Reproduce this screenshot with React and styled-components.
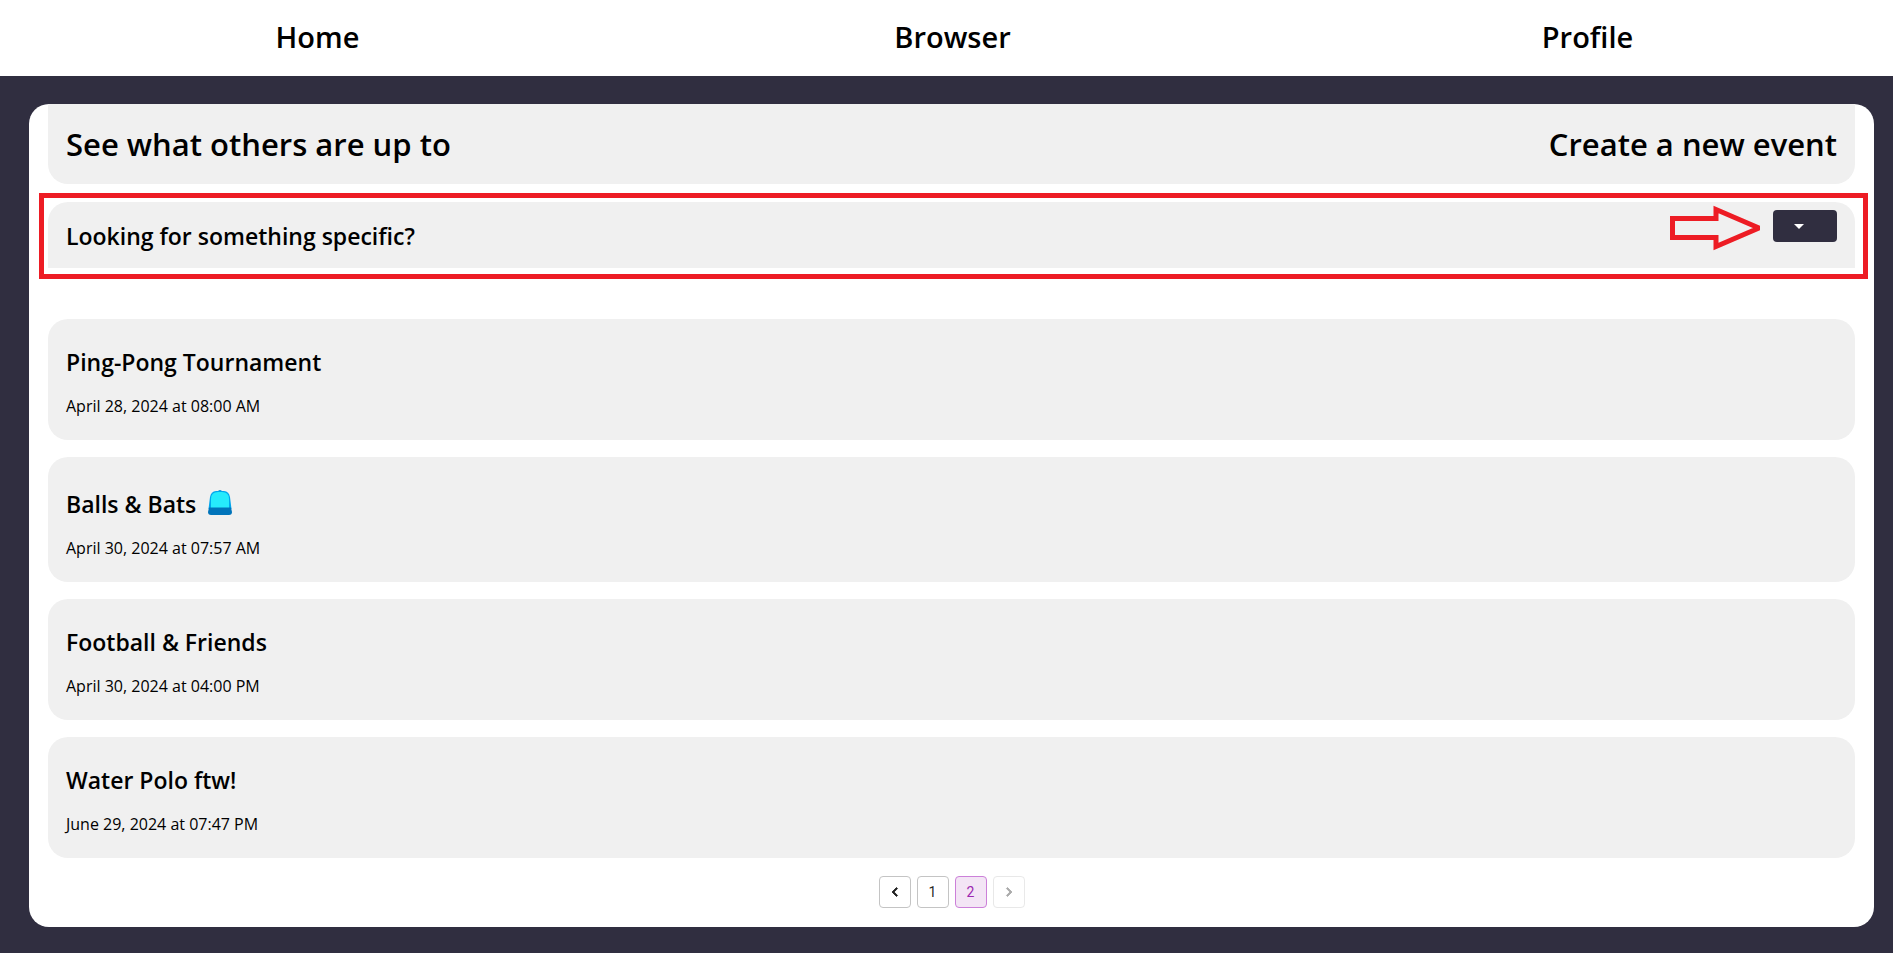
import React from 'react';
import styled, { createGlobalStyle } from 'styled-components';

const navy = '#302e40';
const card = '#f0f0f0';
const red = '#ed1c24';

const GlobalStyle = createGlobalStyle`
  *, *::before, *::after { box-sizing: border-box; }
  body {
    margin: 0;
    background: ${navy};
    color: #000;
    font-family: 'Trebuchet MS', 'Open Sans', 'Noto Sans', sans-serif;
  }
  h1, h2, h3, p, ul { margin: 0; padding: 0; }
`;

const NavBar = styled.nav`
  display: grid;
  grid-template-columns: repeat(3, 1fr);
  column-gap: 24px;
  padding: 17px 0 19px 12px;
  background: #fff;
`;

const NavLink = styled.a`
  justify-self: center;
  color: #000;
  font-size: 29px;
  font-weight: 600;
  line-height: 40px;
  text-decoration: none;
`;

const Panel = styled.main`
  margin: 28px 19px 26px 29px;
  padding: 0 19px 19px;
  border-radius: 20px;
  background: #fff;
`;

const Header = styled.header`
  display: flex;
  justify-content: space-between;
  align-items: center;
  padding: 18px;
  border-radius: 0 0 20px 20px;
  background: ${card};
`;

const Title = styled.h1`
  font-size: 31px;
  font-weight: 600;
  line-height: 44px;
`;

const CreateLink = styled.a`
  color: #000;
  font-size: 31px;
  font-weight: 600;
  line-height: 44px;
  text-decoration: none;
`;

const Search = styled.section`
  position: relative;
  display: flex;
  justify-content: space-between;
  align-items: flex-start;
  margin: 18px 0 51px;
  padding: 8px 18px 6px;
  border-radius: 20px 20px 0 0;
  background: ${card};
`;

const Subtitle = styled.h2`
  font-size: 23px;
  font-weight: 600;
  line-height: 52px;
`;

const ToggleButton = styled.button`
  display: flex;
  align-items: center;
  width: 64px;
  height: 32px;
  padding: 0 0 0 16px;
  border: 0;
  border-radius: 4px;
  background: ${navy};
  color: #fff;
  cursor: pointer;
`;

const Highlight = styled.div`
  position: absolute;
  inset: -9px -13px -11px -9px;
  border: 5px solid ${red};
  pointer-events: none;
`;

const Arrow = styled.svg`
  position: absolute;
  top: 3px;
  right: 92px;
  pointer-events: none;
`;

const EventList = styled.ul`
  display: flex;
  flex-direction: column;
  gap: 17px;
  list-style: none;
`;

const EventCard = styled.li`
  display: flex;
  flex-direction: column;
  gap: 20px;
  padding: 29px 18px 24px;
  border-radius: 20px;
  background: ${card};
`;

const EventTitle = styled.h3`
  display: flex;
  align-items: flex-end;
  gap: 8px;
  font-size: 23px;
  font-weight: 600;
  line-height: 28px;
`;

const EventDate = styled.p`
  font-size: 16px;
  line-height: 20px;
`;

const Pagination = styled.nav`
  display: flex;
  justify-content: center;
  gap: 6px;
  padding-top: 18px;
`;

const PageButton = styled.button`
  display: flex;
  align-items: center;
  justify-content: center;
  width: 32px;
  height: 32px;
  padding: 0;
  border: 1px solid ${p => (p.$active ? '#cc80d9' : '#c4c4c4')};
  border-radius: 4px;
  background: ${p => (p.$active ? '#f3e5f5' : 'transparent')};
  color: ${p => (p.$active ? '#9c27b0' : 'rgba(0, 0, 0, 0.87)')};
  font-family: Roboto, sans-serif;
  font-size: 14px;
  line-height: 20px;
  cursor: pointer;

  &:disabled {
    opacity: 0.38;
    cursor: default;
  }
`;

const CapIcon = () => (
  <svg width="32" height="32" viewBox="0 0 32 32" role="img" aria-label="cap">
    <path d="M14 6a2 2 0 0 1 4 0z" fill="#0093e0" />
    <path d="M4.500 23 6 11Q7 5.500 12 5h8q5 .5 6 6l1.500 12z" fill="#00a6ed" />
    <path d="M7 22V13q0-7 7-7h4q7 0 7 7v9z" fill="#26eafc" />
    <path d="M5 21.500h22l1 4.500q0 3-3 3H7q-3 0-3-3z" fill="#0074ba" />
  </svg>
);

const Chevron = ({ d }) => (
  <svg width="18" height="18" viewBox="0 0 24 24" fill="currentColor" stroke="currentColor" aria-hidden="true">
    <path d={d} />
  </svg>
);

const events = [
  { title: 'Ping-Pong Tournament', date: 'April 28, 2024 at 08:00 AM' },
  { title: 'Balls & Bats', date: 'April 30, 2024 at 07:57 AM', cap: true },
  { title: 'Football & Friends', date: 'April 30, 2024 at 04:00 PM' },
  { title: 'Water Polo ftw!', date: 'June 29, 2024 at 07:47 PM' },
];

export default function App() {
  return (
    <>
      <GlobalStyle />
      <NavBar>
        {['Home', 'Browser', 'Profile'].map(name => (
          <NavLink key={name} href={`#${name.toLowerCase()}`}>{name}</NavLink>
        ))}
      </NavBar>
      <Panel>
        <Header>
          <Title>See what others are up to</Title>
          <CreateLink href="#create">Create a new event</CreateLink>
        </Header>
        <Search>
          <Subtitle>Looking for something specific?</Subtitle>
          <ToggleButton type="button" aria-label="Show filters" aria-expanded="false">
            <svg width="20" height="20" viewBox="0 0 20 20" aria-hidden="true">
              <path d="M5 8h10l-5 5z" fill="currentColor" />
            </svg>
          </ToggleButton>
          <Highlight />
          <Arrow width="94" height="46" viewBox="0 0 94 46" aria-hidden="true">
            <path
              d="M3.500 13.500H47V4.500L90 23 47 41.500V32.500H3.500z"
              fill="none"
              stroke={red}
              strokeWidth="5"
              strokeMiterlimit="2"
            />
          </Arrow>
        </Search>
        <EventList>
          {events.map(({ title, date, cap }) => (
            <EventCard key={title}>
              <EventTitle>{title}{cap && <CapIcon />}</EventTitle>
              <EventDate>{date}</EventDate>
            </EventCard>
          ))}
        </EventList>
        <Pagination aria-label="Pages">
          <PageButton type="button" aria-label="Previous page">
            <Chevron d="M15.41 7.41 14 6l-6 6 6 6 1.41-1.41L10.83 12z" />
          </PageButton>
          <PageButton type="button">1</PageButton>
          <PageButton type="button" $active aria-current="page">2</PageButton>
          <PageButton type="button" disabled aria-label="Next page">
            <Chevron d="M10 6 8.59 7.41 13.17 12l-4.58 4.59L10 18l6-6z" />
          </PageButton>
        </Pagination>
      </Panel>
    </>
  );
}
